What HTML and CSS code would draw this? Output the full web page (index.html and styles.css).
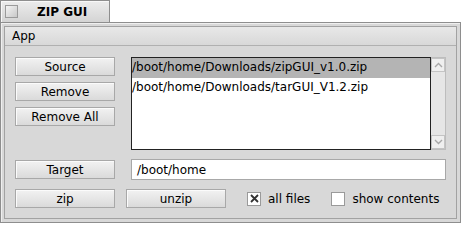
FILE: index.html
```html
<!DOCTYPE html>
<html>
<head>
<meta charset="utf-8">
<link rel="stylesheet" href="styles.css">
</head>
<body>
<div class="tab">
  <span class="close-box"></span>
  <span class="title">ZIP GUI</span>
</div>
<div class="window">
  <div class="inner">
    <div class="menubar"><span class="menu-item">App</span></div>
    <div class="content">
      <div class="top-row">
        <div class="btn-col">
          <div class="btn">Source</div>
          <div class="btn">Remove</div>
          <div class="btn">Remove All</div>
        </div>
        <div class="list-wrap">
          <div class="list">
            <div class="row selected">/boot/home/Downloads/zipGUI_v1.0.zip</div>
            <div class="row">/boot/home/Downloads/tarGUI_V1.2.zip</div>
          </div>
          <div class="scrollbar">
            <div class="arrow">
              <svg width="9" height="6" viewBox="0 0 9 6"><path d="M1 5 L4.5 1.5 L8 5" fill="none" stroke="#a8a8a8" stroke-width="1.4"/></svg>
            </div>
            <div class="track"></div>
            <div class="arrow">
              <svg width="9" height="6" viewBox="0 0 9 6"><path d="M1 1 L4.5 4.5 L8 1" fill="none" stroke="#a8a8a8" stroke-width="1.4"/></svg>
            </div>
          </div>
        </div>
      </div>
      <div class="target-row">
        <div class="btn">Target</div>
        <div class="field">/boot/home</div>
      </div>
      <div class="bottom-row">
        <div class="btn">zip</div>
        <div class="btn">unzip</div>
        <label class="check first"><span class="box checked">
          <svg width="11" height="11" viewBox="0 0 11 11"><path d="M2 2 L9 9 M9 2 L2 9" stroke="#333" stroke-width="1.8"/></svg>
        </span>all files</label>
        <label class="check"><span class="box"></span>show contents</label>
      </div>
    </div>
  </div>
</div>
</body>
</html>
```

FILE: styles.css
```css
* { box-sizing: border-box; }
html, body {
  margin: 0;
  padding: 0;
  background: #ffffff;
  font-family: "DejaVu Sans", "Noto Sans", sans-serif;
  font-size: 12px;
  color: #000;
}
.tab {
  width: 110px;
  height: 22px;
  border: 1px solid #8e8e8e;
  border-bottom: none;
  background: linear-gradient(#ececec, #d4d4d4);
  display: flex;
  align-items: center;
  padding-left: 4px;
  box-shadow: inset 1px 1px 0 #f8f8f8;
}
.close-box {
  width: 13px;
  height: 13px;
  border: 1px solid #9a9a9a;
  background: linear-gradient(135deg, #f4f4f4, #c8c8c8);
}
.title {
  font-weight: bold;
  margin-left: 19px;
  line-height: 14px;
  padding-top: 1px;
}
.window {
  width: 461px;
  height: 201px;
  border: 1px solid #8e8e8e;
  background: #d8d8d8;
  padding: 3px;
  box-shadow: inset 1px 1px 0 #efefef;
}
.inner {
  height: 100%;
  border: 1px solid #a2a2a2;
  display: flex;
  flex-direction: column;
}
.menubar {
  height: 19px;
  background: linear-gradient(#e8e8e8, #d8d8d8);
  border-bottom: 1px solid #b0b0b0;
  display: flex;
  align-items: center;
  padding-left: 7px;
}
.menu-item { line-height: 14px; }
.content {
  flex: 1;
  padding: 11px 10px 0 10px;
  display: flex;
  flex-direction: column;
}
.top-row {
  display: flex;
  gap: 16px;
}
.btn-col {
  display: flex;
  flex-direction: column;
  gap: 6px;
}
.btn {
  width: 100px;
  height: 19px;
  border: 1px solid #a8a8a8;
  background: linear-gradient(#f2f2f2, #dadada);
  box-shadow: inset 1px 1px 0 #fbfbfb;
  display: flex;
  align-items: center;
  justify-content: center;
  line-height: 14px;
}
.list-wrap {
  display: flex;
  height: 93px;
  flex: 1;
}
.list {
  flex: 1;
  background: #fff;
  border: 1px solid #222;
}
.row {
  height: 20px;
  line-height: 19px;
  padding-left: 0;
  white-space: nowrap;
}
.row.selected { background: #b4b4b4; }
.scrollbar {
  width: 15px;
  background: #e6e6e6;
  border: 1px solid #bdbdbd;
  border-left: none;
  display: flex;
  flex-direction: column;
}
.arrow {
  height: 14px;
  border: 1px solid #c4c4c4;
  background: #efefef;
  display: flex;
  align-items: center;
  justify-content: center;
}
.track { flex: 1; }
.target-row {
  display: flex;
  align-items: center;
  gap: 16px;
  margin-top: 9px;
}
.field {
  flex: 1;
  height: 21px;
  background: #fff;
  border: 1px solid #a8a8a8;
  display: flex;
  align-items: center;
  padding-left: 5px;
}
.bottom-row {
  display: flex;
  align-items: center;
  gap: 11px;
  margin-top: 9px;
}
.check {
  display: flex;
  align-items: center;
  gap: 7px;
  line-height: 14px;
}
.check.first { margin-left: 10px; margin-right: 10px; }
.box {
  width: 14px;
  height: 14px;
  background: #fff;
  border: 1px solid #9a9a9a;
  display: flex;
  align-items: center;
  justify-content: center;
}
```
